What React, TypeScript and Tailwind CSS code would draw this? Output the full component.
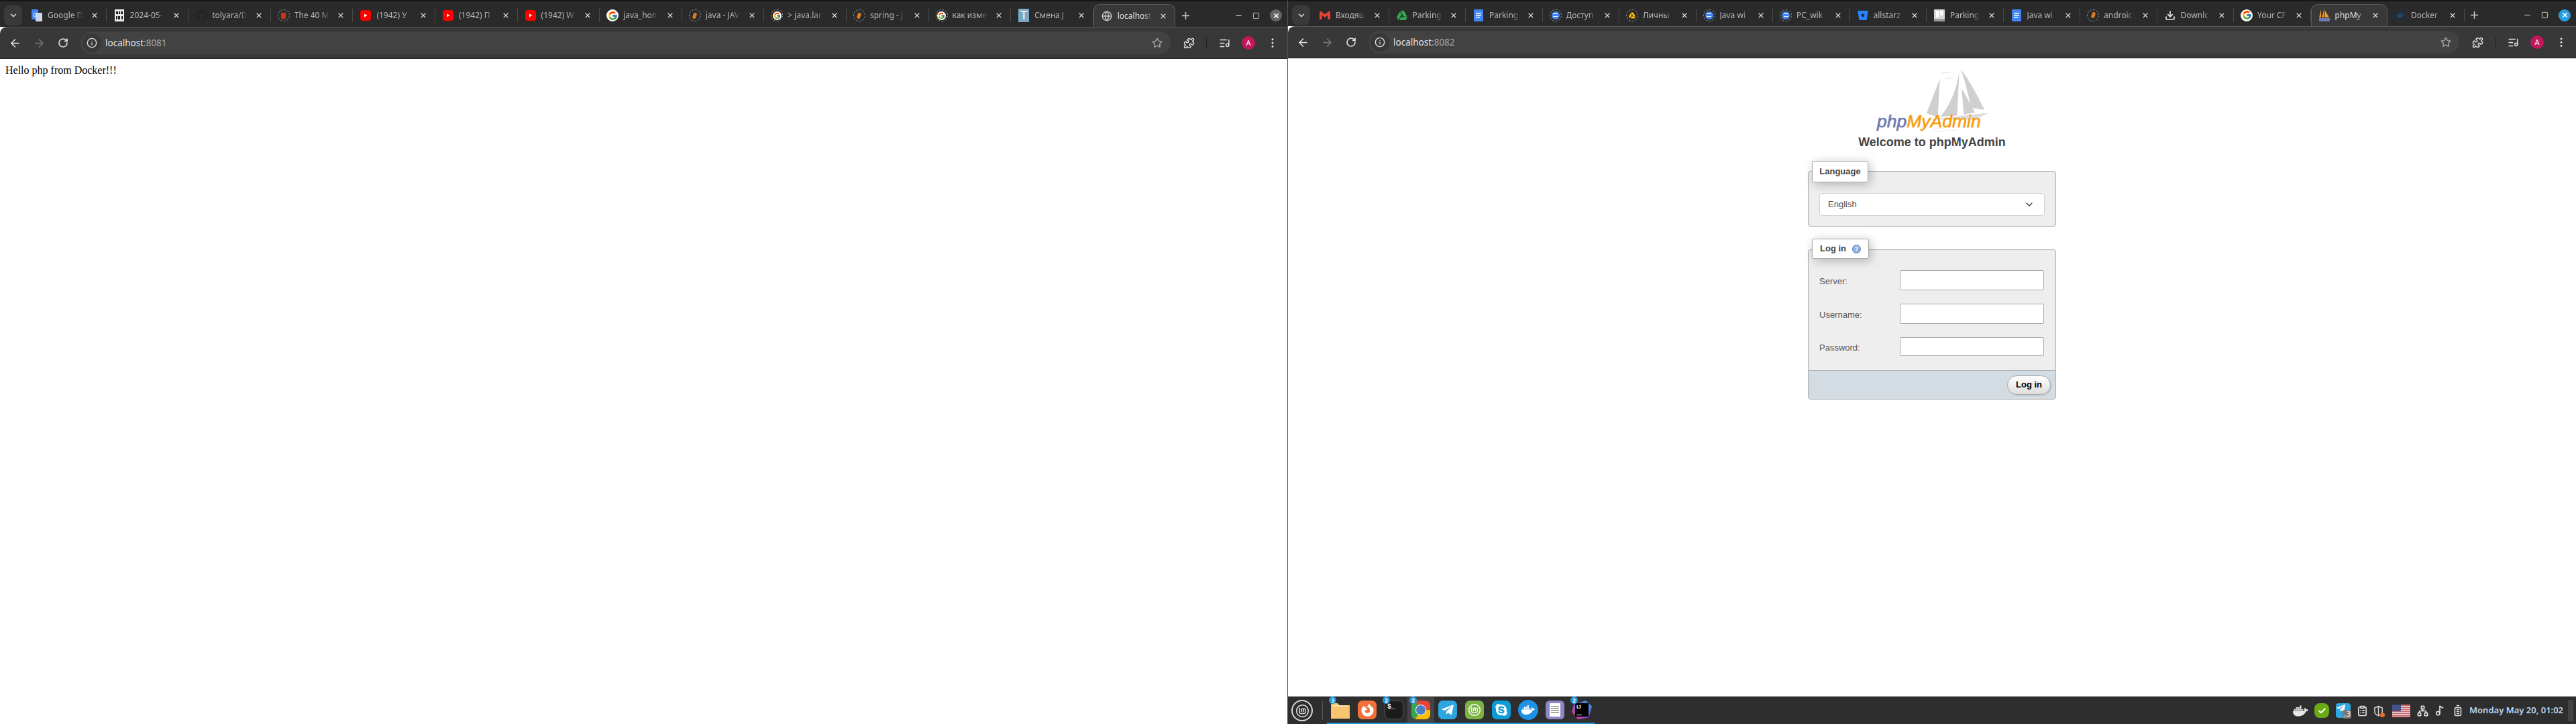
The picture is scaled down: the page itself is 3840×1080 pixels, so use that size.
import React from "react";
import {
  ArrowLeft,
  ArrowRight,
  RotateCw,
  Info,
  Star,
  Puzzle,
  EllipsisVertical,
  X,
  Plus,
  Minus,
  Square,
  ChevronDown,
  ListMusic,
  Music2,
  Network,
  BatteryFull,
  ClipboardList,
  ShieldHalf,
  Check,
  Globe,
  Download,
} from "lucide-react";
import {
  FaDocker,
  FaGithub,
  FaSkype,
  FaTelegramPlane,
  FaBitbucket,
  FaFirefoxBrowser,
} from "react-icons/fa";
import { FcGoogle } from "react-icons/fc";
import { SiGmail, SiGoogledrive, SiLinuxmint } from "react-icons/si";

type Icon =
  | "gdocs"
  | "binary"
  | "github"
  | "record"
  | "youtube"
  | "google"
  | "so"
  | "ringGoogle"
  | "t"
  | "globe"
  | "gmail"
  | "drive"
  | "docs"
  | "ringDocs"
  | "ringDrive"
  | "bitbucket"
  | "trello"
  | "download"
  | "pma"
  | "docker";

interface TabInfo {
  title: string;
  icon: Icon;
  active?: boolean;
}

const leftTabs: TabInfo[] = [
  { title: "Google П", icon: "gdocs" },
  { title: "2024-05-", icon: "binary" },
  { title: "tolyara/D", icon: "github" },
  { title: "The 40 M", icon: "record" },
  { title: "(1942) У", icon: "youtube" },
  { title: "(1942) П", icon: "youtube" },
  { title: "(1942) W", icon: "youtube" },
  { title: "java_hon", icon: "google" },
  { title: "java - JAV", icon: "so" },
  { title: "> java.lar", icon: "ringGoogle" },
  { title: "spring - j", icon: "so" },
  { title: "как изме", icon: "ringGoogle" },
  { title: "Смена J", icon: "t" },
  { title: "localhost", icon: "globe", active: true },
];

const rightTabs: TabInfo[] = [
  { title: "Входящ", icon: "gmail" },
  { title: "Parking", icon: "drive" },
  { title: "Parking", icon: "docs" },
  { title: "Доступ", icon: "ringDocs" },
  { title: "Личны", icon: "ringDrive" },
  { title: "Java wi", icon: "ringDocs" },
  { title: "PC_wik", icon: "ringDocs" },
  { title: "allstarz", icon: "bitbucket" },
  { title: "Parking", icon: "trello" },
  { title: "Java wi", icon: "docs" },
  { title: "androic", icon: "so" },
  { title: "Downlc", icon: "download" },
  { title: "Your CF", icon: "google" },
  { title: "phpMy", icon: "pma", active: true },
  { title: "Docker", icon: "docker" },
];

function DocsGlyph() {
  return (
    <svg width="14" height="18" viewBox="0 0 14 18">
      <rect width="14" height="18" rx="1.5" fill="#4285f4" />
      <path d="M3 6h8M3 9h8M3 12h6" stroke="#fff" strokeWidth="1.5" />
    </svg>
  );
}

function Ring({ children }: { children: React.ReactNode }) {
  return (
    <span className="relative flex h-[18px] w-[18px] items-center justify-center rounded-full border border-dashed border-[#9a9a9a]">
      {children}
    </span>
  );
}

function Favicon({ icon }: { icon: Icon }) {
  switch (icon) {
    case "gdocs":
      return (
        <svg width="16" height="18" viewBox="0 0 16 18">
          <rect width="10" height="15" rx="1" fill="#4285f4" />
          <rect x="6" y="5" width="10" height="13" rx="1" fill="#c8d6ee" />
          <text x="2" y="11" fontSize="8" fill="#fff" fontFamily="Liberation Sans">G</text>
        </svg>
      );
    case "binary":
      return (
        <svg width="14" height="18" viewBox="0 0 14 18">
          <rect width="14" height="18" fill="#eee" />
          <path d="M2 3h3v4H2zM6 3h2v4H6zM9 3h3v4H9zM2 10h2v5H2zM5 10h3v5H5zM10 10h2v5h-2z" fill="#222" />
        </svg>
      );
    case "github":
      return <FaGithub className="h-[17px] w-[17px] text-[#1f2328]" />;
    case "record":
      return (
        <Ring>
          <span className="h-[9px] w-[7px] rounded-[1px] bg-[#c8341c]" />
        </Ring>
      );
    case "youtube":
      return (
        <svg width="16" height="18" viewBox="0 0 16 18">
          <rect y="1" width="16" height="16" rx="4" fill="#f00" />
          <path d="M6 6.5l4.5 2.5L6 11.5z" fill="#fff" />
        </svg>
      );
    case "google":
      return (
        <span className="flex h-[18px] w-[18px] items-center justify-center rounded-full bg-white">
          <FcGoogle className="h-[15px] w-[15px]" />
        </span>
      );
    case "so":
      return (
        <Ring>
          <span className="h-[9px] w-[5px] rotate-[20deg] rounded-[2px] bg-[#d87a24]" />
        </Ring>
      );
    case "ringGoogle":
      return (
        <Ring>
          <span className="flex h-[13px] w-[13px] items-center justify-center rounded-full bg-white">
            <FcGoogle className="h-[11px] w-[11px]" />
          </span>
        </Ring>
      );
    case "t":
      return (
        <span className="flex h-[20px] w-[16px] items-center justify-center bg-[#78a9c4] font-['Liberation_Sans'] text-[18px] leading-none text-white">
          T
        </span>
      );
    case "globe":
      return <Globe className="h-[16px] w-[16px] text-[#c9c9c9]" />;
    case "gmail":
      return <SiGmail className="h-[16px] w-[16px] text-[#ea4335]" />;
    case "drive":
      return <SiGoogledrive className="h-[16px] w-[16px] text-[#34a853]" />;
    case "docs":
      return <DocsGlyph />;
    case "ringDocs":
      return (
        <Ring>
          <span className="flex h-[12px] w-[12px] items-center justify-center rounded-full bg-[#4285f4]">
            <span className="h-[5px] w-[7px] border-y border-white" />
          </span>
        </Ring>
      );
    case "ringDrive":
      return (
        <Ring>
          <SiGoogledrive className="h-[10px] w-[10px] text-[#fbbc04]" />
        </Ring>
      );
    case "bitbucket":
      return <FaBitbucket className="h-[16px] w-[16px] text-[#2684ff]" />;
    case "trello":
      return (
        <svg width="16" height="18" viewBox="0 0 16 18">
          <rect width="16" height="18" rx="1" fill="#d8d8d8" />
          <path d="M3 2h4v10H3zM9 2h4v7H9z" fill="#fff" />
          <rect y="14" width="16" height="4" fill="#9a9a9a" />
        </svg>
      );
    case "download":
      return <Download className="h-[16px] w-[16px] text-[#e4e4e4]" strokeWidth={2.6} />;
    case "pma":
      return (
        <svg width="16" height="20" viewBox="0 0 16 20">
          <path d="M3 1L0 13h3zM8 0L4 13h4zM9 3l6 10H9z" fill="#f39b1e" />
          <rect y="14" width="16" height="5" fill="#6c78af" />
        </svg>
      );
    case "docker":
      return (
        <span className="flex h-[18px] w-[18px] items-center justify-center rounded-full border border-[#1d3a55]">
          <FaDocker className="h-[11px] w-[11px] text-[#1d4d78]" />
        </span>
      );
  }
}

function Tab({ tab, width }: { tab: TabInfo; width: number }) {
  return (
    <div
      style={{ width }}
      className={`relative flex h-full shrink-0 items-center ${
        tab.active
          ? "z-10 -mb-px rounded-t-[10px] border-x border-t border-[#5c5c5c] bg-[#383838]"
          : "border-r border-[#4a4a4a] my-auto !h-[20px]"
      }`}
    >
      <span className="ml-[10px] flex h-[20px] w-[18px] shrink-0 items-center justify-center">
        <Favicon icon={tab.icon} />
      </span>
      <span
        className={`ml-[7px] min-w-0 flex-1 whitespace-nowrap font-['Noto_Sans'] text-[12px] [mask-image:linear-gradient(to_right,black_75%,transparent)] ${
          tab.active ? "text-[#e4e4e4]" : "text-[#b9b9b9]"
        }`}
      >
        {tab.title}
      </span>
      <X className="mx-[11px] h-[12px] w-[12px] shrink-0 text-[#dedede]" strokeWidth={2.2} />
    </div>
  );
}

function TabStrip({
  tabs,
  tabWidth,
  closeBg,
  height,
}: {
  tabs: TabInfo[];
  tabWidth: number;
  closeBg: string;
  height: string;
}) {
  return (
    <div className={`flex ${height} shrink-0 items-stretch border-t-2 border-[#151515] bg-[#2a2a2a] pt-[4px]`}>
      <div className="ml-[6px] mr-[3px] my-[2px] flex w-[27px] items-center justify-center rounded-lg bg-[#3a3a3a]">
        <ChevronDown className="h-[14px] w-[14px] text-[#e0e0e0]" strokeWidth={2.5} />
      </div>
      {tabs.map((tab, i) => (
        <Tab key={i} tab={tab} width={tabWidth} />
      ))}
      <div className="flex w-[30px] items-center justify-center">
        <Plus className="h-[17px] w-[17px] text-[#d0d0d0]" />
      </div>
      <div className="ml-auto flex items-center pr-[8px]">
        <Minus className="h-[13px] w-[13px] text-[#d8d8d8]" />
        <Square className="ml-[14px] h-[13px] w-[11px] text-[#cfcfcf]" />
        <span className={`ml-[15px] flex h-[18px] w-[18px] items-center justify-center rounded-full ${closeBg}`}>
          <X className="h-[11px] w-[11px] text-white" strokeWidth={3.5} />
        </span>
      </div>
    </div>
  );
}

function Toolbar({ url, port }: { url: string; port: string }) {
  return (
    <div className="flex h-[48px] shrink-0 items-center rounded-tl-[10px] border-b border-[#1f1f1f] border-t border-t-[#5a5a5a] bg-[#383838] pl-[4px] pr-[4px]">
      <span className="flex w-[36px] justify-center">
        <ArrowLeft className="h-[19px] w-[19px] text-[#e6e6e6]" />
      </span>
      <span className="flex w-[36px] justify-center">
        <ArrowRight className="h-[19px] w-[19px] text-[#777]" />
      </span>
      <span className="flex w-[36px] justify-center">
        <RotateCw className="h-[16px] w-[16px] text-[#e6e6e6]" strokeWidth={2.4} />
      </span>
      <div className="ml-[8px] flex h-[34px] flex-1 items-center rounded-full bg-[#424242] pl-[3px] pr-[12px]">
        <span className="flex h-[28px] w-[28px] items-center justify-center rounded-full bg-[#383838]">
          <Info className="h-[16px] w-[16px] text-[#dedede]" />
        </span>
        <span className="ml-[6px] font-['Noto_Sans'] text-[13.5px] text-[#e2e2e2]">
          {url}
          <span className="text-[#a8a8a8]">{port}</span>
        </span>
        <Star className="ml-auto h-[16px] w-[16px] text-[#a0a0a0]" strokeWidth={2.4} />
      </div>
      <span className="ml-[9px] flex w-[36px] justify-center">
        <Puzzle className="h-[17px] w-[17px] text-[#e6e6e6]" />
      </span>
      <span className="mx-[8px] h-[16px] w-px bg-[#222]" />
      <span className="flex w-[36px] justify-center">
        <ListMusic className="h-[17px] w-[17px] text-[#e6e6e6]" />
      </span>
      <span className="flex w-[36px] justify-center">
        <span className="flex h-[20px] w-[20px] items-center justify-center rounded-full bg-[#c2185b] font-['Noto_Sans'] text-[11px] text-white">
          A
        </span>
      </span>
      <span className="flex w-[36px] justify-center">
        <EllipsisVertical className="h-[18px] w-[18px] text-[#e6e6e6]" />
      </span>
    </div>
  );
}

function PmaLogo() {
  return (
    <div className="relative h-[100px] w-[173px]">
      <svg width="173" height="100" viewBox="400 30 520 300">
        <path d="M688 85L628 240l50 18z" fill="#cfcfcf" />
        <path d="M775 50C765 130 730 210 690 256l75-6z" fill="#cfcfcf" />
        <path d="M785 130L795 245l50-8C825 200 805 160 785 130z" fill="#cfcfcf" />
        <path d="M782 45C820 90 860 170 888 225l-60-10C815 160 800 90 782 45z" fill="#cfcfcf" />
        <path d="M640 268L908 238l-60 30z" fill="#dcdcdc" />
        <path d="M695 60q12-8 20 0q8-8 20 0M710 84q12-8 20 0q8-8 20 0" fill="none" stroke="#cfcfcf" strokeWidth="2" />
        <path d="M650 312q30-10 60 0t60 0M660 324q30-8 50 0" fill="none" stroke="#e4e4e4" strokeWidth="2" />
      </svg>
      <span className="absolute left-[2px] top-[66px] font-['Liberation_Sans'] text-[26.5px] italic leading-[32px] text-[#6c78af] [-webkit-text-stroke:0.6px]">
        php<span className="text-[#f89c0e]">MyAdmin</span>
      </span>
    </div>
  );
}

function LoginRow({ label, short }: { label: string; short?: boolean }) {
  return (
    <div className="flex items-center justify-between">
      <span className="pt-[3px] text-[13px] text-[#555]">{label}</span>
      <input
        type="text"
        className={`w-[215px] rounded-[2px] border border-[#aaa] bg-white ${short ? "h-[28px]" : "h-[30px]"}`}
      />
    </div>
  );
}

function PhpMyAdminPage() {
  return (
    <div className="flex min-h-0 flex-1 flex-col items-center bg-white font-['Liberation_Sans']">
      <div className="w-[370px]">
        <div className="ml-[101px] mt-[12px]">
          <PmaLogo />
        </div>
        <h1 className="mt-[1px] text-center text-[18px] font-bold leading-[24px] text-[#444]">
          Welcome to phpMyAdmin
        </h1>
        <div className="mt-[31px] rounded-[4px] border border-[#aaa] bg-[#eee]">
          <div className="-mt-[16px] ml-[5px] flex h-[32px] w-[84px] items-center justify-center rounded-[2px] border border-[#aaa] bg-white text-[13px] font-bold text-[#444] shadow-[3px_3px_15px_rgba(0,0,0,0.25)]">
            Language
          </div>
          <div className="mx-[16px] mb-[15px] mt-[16px] flex h-[34px] items-center justify-between rounded-[4px] border border-[#ced4da] bg-white pl-[12px] pr-[14px] text-[13px] text-[#495057]">
            English
            <ChevronDown className="h-[16px] w-[16px] text-[#343a40]" />
          </div>
        </div>
        <div className="mt-[34px] rounded-[4px] border border-[#aaa] bg-[#eee]">
          <div className="-mt-[17px] ml-[5px] flex h-[30px] w-[85px] items-center gap-[9px] rounded-[2px] border border-[#aaa] bg-white pl-[11px] text-[13px] font-bold text-[#444] shadow-[3px_3px_15px_rgba(0,0,0,0.25)]">
            Log in
            <span className="flex h-[13px] w-[13px] items-center justify-center rounded-full border border-[#4f7fc0] bg-[#8fb2dd] text-[9px] font-bold leading-none text-white">
              ?
            </span>
          </div>
          <div className="flex flex-col gap-[20px] pb-[21px] pl-[16px] pr-[17px] pt-[17px]">
            <LoginRow label="Server:" />
            <LoginRow label="Username:" />
            <LoginRow label="Password:" short />
          </div>
          <div className="flex h-[43px] items-center justify-end rounded-b-[4px] border-t border-[#aaa] bg-[#d3dce3] pr-[7px]">
            <button className="h-[29px] w-[65px] rounded-full border border-[#aaa] bg-gradient-to-b from-white to-[#ddd] text-[13px] font-bold text-black shadow-[1px_1px_2px_rgba(0,0,0,0.15)]">
              Log in
            </button>
          </div>
        </div>
      </div>
    </div>
  );
}

function Badge({ n }: { n: number }) {
  return (
    <span className="absolute -top-[1px] left-[3px] z-10 flex h-[11px] w-[11px] items-center justify-center rounded-full bg-[#2394d8] font-['Noto_Sans'] text-[8px] font-bold leading-none text-white">
      {n}
    </span>
  );
}

function Launcher({
  children,
  badge,
  current,
}: {
  children: React.ReactNode;
  badge?: number;
  current?: boolean;
}) {
  return (
    <div
      className={`relative flex h-full w-[40px] items-center justify-center border-b-2 border-[#2394d8] ${
        current ? "bg-[#444]" : ""
      }`}
    >
      {badge && <Badge n={badge} />}
      {children}
    </div>
  );
}

function Taskbar() {
  return (
    <div className="flex h-[41px] shrink-0 items-center border-t border-[#1b1b1b] bg-[#2e2e2e]">
      <div className="flex w-[42px] items-center justify-center">
        <span className="flex h-[32px] w-[32px] items-center justify-center rounded-full border-[2px] border-[#d8d8d8]">
          <SiLinuxmint className="h-[19px] w-[19px] text-[#e0e0e0]" />
        </span>
      </div>
      <span className="ml-[9px] h-[28px] w-px bg-[#555]" />
      <div className="ml-[6px] flex h-full">
        <Launcher badge={3}>
          <svg width="28" height="26" viewBox="0 0 28 26">
            <path d="M0 3h10l3 3h15v20H0z" fill="#f7c46f" />
            <path d="M3 6h22v2H3z" fill="#fde3ae" />
          </svg>
        </Launcher>
        <Launcher>
          <span className="flex h-[28px] w-[28px] items-center justify-center rounded-[7px] bg-[#f2713a]">
            <FaFirefoxBrowser className="h-[19px] w-[19px] text-white" />
          </span>
        </Launcher>
        <Launcher badge={2}>
          <span className="flex h-[28px] w-[28px] items-start rounded-[7px] border border-[#555] bg-[#1b1b1b] pl-[3px] pt-[1px] font-['Liberation_Mono'] text-[10px] font-bold text-white">
            $_
          </span>
        </Launcher>
        <Launcher badge={2} current>
          <span className="relative h-[28px] w-[28px] overflow-hidden rounded-[7px] bg-[conic-gradient(from_-30deg,#ea4335_0_120deg,#fbbc04_120deg_240deg,#34a853_240deg_360deg)]">
            <span className="absolute left-[6px] top-[6px] h-[16px] w-[16px] rounded-full border border-white bg-[#4a7fc4]" />
          </span>
        </Launcher>
        <Launcher>
          <span className="flex h-[28px] w-[28px] items-center justify-center rounded-[7px] bg-[#2ca5e0]">
            <FaTelegramPlane className="h-[20px] w-[20px] text-white" />
          </span>
        </Launcher>
        <Launcher>
          <span className="flex h-[28px] w-[28px] items-center justify-center rounded-[7px] bg-[#7cb342]">
            <SiLinuxmint className="h-[18px] w-[18px] text-white" />
          </span>
        </Launcher>
        <Launcher>
          <span className="flex h-[28px] w-[28px] items-center justify-center rounded-[7px] bg-[#0b9bd7]">
            <FaSkype className="h-[20px] w-[20px] text-white" />
          </span>
        </Launcher>
        <Launcher>
          <span className="flex h-[30px] w-[30px] items-center justify-center rounded-full bg-[#1d91e6]">
            <FaDocker className="h-[20px] w-[20px] text-white" />
          </span>
        </Launcher>
        <Launcher>
          <span className="flex h-[28px] w-[28px] items-center justify-center rounded-[6px] bg-[#8c86c9]">
            <span className="flex h-[20px] w-[16px] flex-col gap-[2px] bg-white px-[2px] pt-[4px]">
              <span className="h-px bg-[#777]" />
              <span className="h-px bg-[#777]" />
              <span className="h-px bg-[#777]" />
              <span className="h-px bg-[#777]" />
            </span>
          </span>
        </Launcher>
        <Launcher badge={2}>
          <span className="relative flex h-[28px] w-[30px] items-center justify-center bg-[linear-gradient(45deg,#f0397f,#8a4cd8_45%,#1fa9e8)] [clip-path:polygon(10%_20%,70%_0,100%_30%,85%_90%,30%_100%,0_60%)]">
            <span className="flex h-[20px] w-[20px] flex-col justify-between bg-black p-[2px] font-['Liberation_Sans'] text-[8px] font-bold leading-none text-white">
              IJ
              <span className="h-px w-[8px] bg-white" />
            </span>
          </span>
        </Launcher>
      </div>
      <div className="ml-auto flex h-full items-center">
        <span className="flex w-[32px] justify-center">
          <FaDocker className="h-[23px] w-[23px] text-[#e8e8e8]" />
        </span>
        <span className="flex w-[32px] justify-center">
          <span className="flex h-[22px] w-[22px] items-center justify-center rounded-[8px] bg-[#6aaa14]">
            <Check className="h-[13px] w-[13px] text-white" strokeWidth={3.5} />
          </span>
        </span>
        <span className="flex w-[32px] justify-center">
          <span className="relative h-[22px] w-[22px] rounded-[4px] bg-[#2ca5e0]">
            <FaTelegramPlane className="h-[15px] w-[15px] text-white" />
            <span className="absolute -bottom-px -right-px rounded-[3px] bg-[#777] px-[1px] font-['Noto_Sans'] text-[10px] leading-[13px] text-white">
              ..3
            </span>
          </span>
        </span>
        <span className="flex w-[24px] justify-center">
          <ClipboardList className="h-[17px] w-[17px] text-[#e8e8e8]" strokeWidth={2.2} />
        </span>
        <span className="flex w-[24px] justify-center">
          <span className="relative">
            <ShieldHalf className="h-[17px] w-[17px] text-[#d8d8d8]" />
            <span className="absolute -bottom-[1px] -right-[1px] h-[7px] w-[7px] rounded-full bg-[#e0702c]" />
          </span>
        </span>
        <span className="flex w-[44px] justify-center">
          <svg width="27" height="19" viewBox="0 0 27 19">
            <rect width="27" height="19" fill="#eee" />
            <path d="M0 1h27M0 4h27M0 7h27M0 10h27M0 13h27M0 16h27" stroke="#c2404c" strokeWidth="1.5" />
            <path d="M0 18.3h27" stroke="#c2404c" strokeWidth="1.4" />
            <rect width="13" height="10" fill="#45518a" />
          </svg>
        </span>
        <span className="flex w-[20px] justify-center">
          <Network className="h-[17px] w-[17px] text-[#e8e8e8]" strokeWidth={2.4} />
        </span>
        <span className="flex w-[32px] justify-center">
          <Music2 className="h-[16px] w-[16px] text-[#e8e8e8]" strokeWidth={2.4} />
        </span>
        <span className="flex w-[22px] justify-center">
          <BatteryFull className="h-[18px] w-[18px] -rotate-90 text-[#e8e8e8]" />
        </span>
        <span className="ml-[6px] w-[147px] whitespace-nowrap font-['Noto_Sans'] text-[13px] font-semibold text-[#bcd7f2]">
          Monday May 20, 01:02
        </span>
        <span className="mr-[4px] h-[32px] w-[8px] bg-[#444]" />
      </div>
    </div>
  );
}

export default function App() {
  return (
    <div className="flex h-[1080px] w-[3840px] overflow-hidden bg-white">
      <div className="flex w-[1919px] shrink-0 flex-col">
        <TabStrip tabs={leftTabs} tabWidth={122.6} closeBg="bg-[#666]" height="h-[40px]" />
        <Toolbar url="localhost" port=":8081" />
        <div className="flex-1 bg-white p-[8px] font-['Liberation_Serif'] text-[16px] leading-[18px] text-black">
          Hello php from Docker!!!
        </div>
      </div>
      <div className="w-px shrink-0 bg-[#555]" />
      <div className="flex w-[1920px] shrink-0 flex-col">
        <TabStrip tabs={rightTabs} tabWidth={114.5} closeBg="bg-[#2a9fe0]" height="h-[39px]" />
        <Toolbar url="localhost" port=":8082" />
        <PhpMyAdminPage />
        <Taskbar />
      </div>
    </div>
  );
}
